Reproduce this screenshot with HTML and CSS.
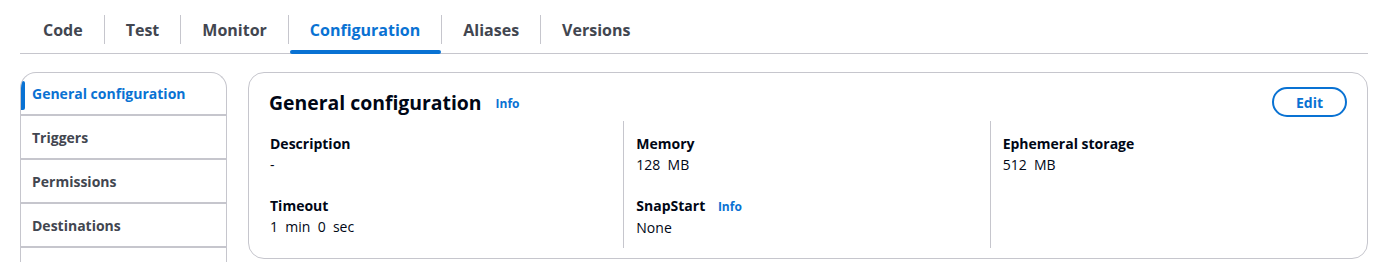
FILE: index.html
```html
<!DOCTYPE html>
<html lang="en">
<head>
<meta charset="utf-8">
<title>Function configuration</title>
<link rel="stylesheet" href="styles.css">
</head>
<body>
<div class="page">
  <div class="tabs">
    <div class="tab first"><span class="tab-label">Code</span></div>
    <div class="tab"><span class="tab-label">Test</span></div>
    <div class="tab"><span class="tab-label">Monitor</span></div>
    <div class="tab active"><span class="tab-label">Configuration</span></div>
    <div class="tab"><span class="tab-label">Aliases</span></div>
    <div class="tab"><span class="tab-label">Versions</span></div>
  </div>
  <div class="layout">
    <nav class="side">
      <a class="side-item active">General configuration</a>
      <a class="side-item">Triggers</a>
      <a class="side-item">Permissions</a>
      <a class="side-item">Destinations</a>
      <span class="side-item rest"></span>
    </nav>
    <section class="card">
      <header class="card-head">
        <h2 class="card-title">General configuration</h2>
        <a class="info">Info</a>
        <button class="btn">Edit</button>
      </header>
      <div class="cols">
        <div class="col">
          <div class="kv"><div class="k">Description</div><div class="v">-</div></div>
          <div class="kv"><div class="k">Timeout</div><div class="v">1&nbsp; min&nbsp; 0&nbsp; sec</div></div>
        </div>
        <div class="col">
          <div class="kv"><div class="k">Memory</div><div class="v">128&nbsp; MB</div></div>
          <div class="kv"><div class="k">SnapStart <a class="info small">Info</a></div><div class="v">None</div></div>
        </div>
        <div class="col">
          <div class="kv"><div class="k">Ephemeral storage</div><div class="v">512&nbsp; MB</div></div>
        </div>
      </div>
    </section>
  </div>
</div>
</body>
</html>
```

FILE: styles.css
```css
* { box-sizing: border-box; }
html, body { margin: 0; padding: 0; background: #ffffff; }
body {
  font-family: "Open Sans", "Noto Sans", Arial, sans-serif;
  color: #000716;
  font-size: 14px;
  line-height: 20px;
}
.page { padding: 0 24px 0 20px; }

.tabs {
  display: flex;
  border-bottom: 1px solid #c6c6cd;
}
.tab {
  position: relative;
  padding: 15px 0 9px;
}
.tab-label {
  display: block;
  border-left: 1px solid #c6c6cd;
  padding: 0 21px;
  line-height: 31px;
  height: 29px;
  font-size: 16px;
  font-weight: 700;
  color: #424650;
}
.tab.first .tab-label { border-left-color: transparent; padding-left: 22px; }
.tab.active .tab-label { color: #0972d3; }
.tab.active::after {
  content: "";
  position: absolute;
  left: 2px;
  right: 0;
  bottom: -1px;
  height: 4px;
  border-radius: 2px;
  background: #0972d3;
}

.layout {
  display: grid;
  grid-template-columns: 207px 1fr;
  column-gap: 21px;
  margin-top: 18px;
  align-items: start;
}

.side {
  display: flex;
  flex-direction: column;
  border: 1px solid #c6c6cd;
  border-bottom: none;
  border-radius: 16px 16px 0 0;
  overflow: hidden;
}
.side-item {
  position: relative;
  display: flex;
  align-items: center;
  height: 44px;
  flex: 0 0 44px;
  padding: 1px 11px 0;
  border-bottom: 2px solid #c6c6cd;
  font-weight: 700;
  color: #424650;
}
.side-item:first-child { height: 43px; flex-basis: 43px; padding-top: 0; }
.side-item.rest { border-bottom: none; height: 20px; flex-basis: 20px; }
.side-item.active { color: #0972d3; }
.side-item.active::before {
  content: "";
  position: absolute;
  left: 0;
  top: 8px;
  bottom: 4px;
  width: 4px;
  border-radius: 0 2px 2px 0;
  background: #0972d3;
}

.card {
  border: 1px solid #c6c6cd;
  border-radius: 16px;
  padding: 14px 20px 10px;
}
.card-head {
  display: flex;
  align-items: center;
  height: 30px;
}
.card-title {
  margin: 0;
  font-size: 19.4px;
  line-height: 24px;
  padding-top: 1px;
  font-weight: 700;
  color: #000716;
}
.info {
  margin-left: 14px;
  margin-top: 3px;
  font-size: 12px;
  font-weight: 700;
  color: #0972d3;
}
.info.small { margin-left: 9px; margin-top: 0; }
.btn {
  margin-left: auto;
  height: 30px;
  padding: 0 22px;
  border: 2px solid #0972d3;
  border-radius: 20px;
  background: #ffffff;
  font-family: inherit;
  font-size: 14px;
  font-weight: 700;
  color: #0972d3;
}

.cols {
  display: grid;
  grid-template-columns: repeat(3, 1fr);
  margin: 4px -9px 0 -12px;
}
.col {
  display: flex;
  flex-direction: column;
  gap: 20px;
  border-left: 1px solid #c6c6cd;
  padding: 12px 12px 10px;
}
.col:first-child { border-left-color: transparent; }
.k {
  font-weight: 700;
  line-height: 21px;
  margin-bottom: 1px;
  color: #000716;
}
.v { color: #000716; }
```
